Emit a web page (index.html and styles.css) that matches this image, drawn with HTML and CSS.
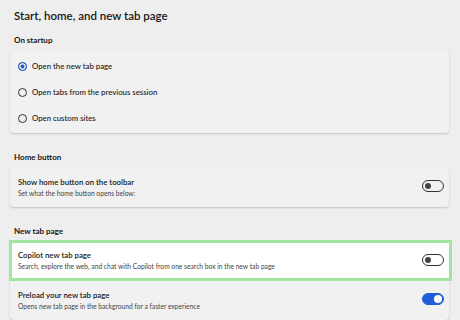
FILE: index.html
```html
<!DOCTYPE html>
<html lang="en">
<head>
    <meta charset="UTF-8">
    <title>Start, home, and new tab page</title>
    <link rel="stylesheet" href="styles.css">
</head>
<body>
    <div class="page">
        <h1>Start, home, and new tab page</h1>

        <h2>On startup</h2>
        <div class="card radios">
            <label class="radio-row"><span class="radio checked"></span>Open the new tab page</label>
            <label class="radio-row"><span class="radio"></span>Open tabs from the previous session</label>
            <label class="radio-row"><span class="radio"></span>Open custom sites</label>
        </div>

        <h2 class="gap">Home button</h2>
        <div class="card">
            <div class="setting">
                <div class="text">
                    <div class="title">Show home button on the toolbar</div>
                    <div class="sub">Set what the home button opens below:</div>
                </div>
                <span class="toggle"></span>
            </div>
        </div>

        <h2 class="gap">New tab page</h2>
        <div class="card">
            <div class="setting highlight">
                <div class="text">
                    <div class="title">Copilot new tab page</div>
                    <div class="sub">Search, explore the web, and chat with Copilot from one search box in the new tab page</div>
                </div>
                <span class="toggle"></span>
            </div>
            <div class="setting">
                <div class="text">
                    <div class="title">Preload your new tab page</div>
                    <div class="sub">Opens new tab page in the background for a faster experience</div>
                </div>
                <span class="toggle on"></span>
            </div>
        </div>
    </div>
</body>
</html>
```

FILE: styles.css
```css
body {
    margin: 0;
    background: #eeeeee;
    font-family: Lato, "Open Sans", sans-serif;
    color: #161616;
}
.page {
    padding: 6px 11px 0 10px;
}
h1 {
    margin: 0 0 7px 4px;
    font-size: 11.5px;
    line-height: 20px;
    font-weight: 600;
}
h2 {
    margin: 0 0 3px 4px;
    font-size: 8px;
    line-height: 14px;
    font-weight: 700;
}
h2.gap {
    margin-top: 17px;
}
.card {
    background: #f1f1f1;
    border-radius: 4px;
    box-shadow: 0 1px 2px rgba(0, 0, 0, 0.18);
}
.radios {
    padding: 3px 0 2px;
}
.radio-row {
    display: flex;
    align-items: center;
    height: 26px;
    padding-left: 8px;
    font-size: 7.8px;
    font-weight: 500;
}
.radio {
    width: 7px;
    height: 7px;
    border: 1px solid #333;
    border-radius: 50%;
    margin-right: 5px;
    box-sizing: content-box;
}
.radio.checked {
    border-color: #1f4fb5;
    background: #2557c7;
    box-shadow: inset 0 0 0 1.5px #f1f1f1;
}
.setting {
    display: flex;
    align-items: center;
    padding: 0 5px 0 8px;
    height: 40px;
}
.text {
    flex: 1;
}
.title {
    font-size: 7.8px;
    line-height: 12px;
    font-weight: 600;
}
.sub {
    font-size: 6.7px;
    line-height: 11px;
    color: #444;
}
.highlight {
    background: #fff;
    outline: 3px solid #a3e4a0;
    outline-offset: -2px;
    height: 39px;
    margin-right: -2px;
    padding-right: 7px;
}
.toggle {
    position: relative;
    width: 20px;
    height: 10px;
    border: 1px solid #333;
    border-radius: 6px;
    margin-bottom: 2px;
}
.toggle::after {
    content: "";
    position: absolute;
    top: 2px;
    left: 2px;
    width: 6px;
    height: 6px;
    border-radius: 50%;
    background: #444;
}
.toggle.on {
    background: #1f5ed6;
    border-color: #1f5ed6;
}
.toggle.on::after {
    left: auto;
    right: 1px;
    top: 1px;
    width: 8px;
    height: 8px;
    background: #fff;
}
```
